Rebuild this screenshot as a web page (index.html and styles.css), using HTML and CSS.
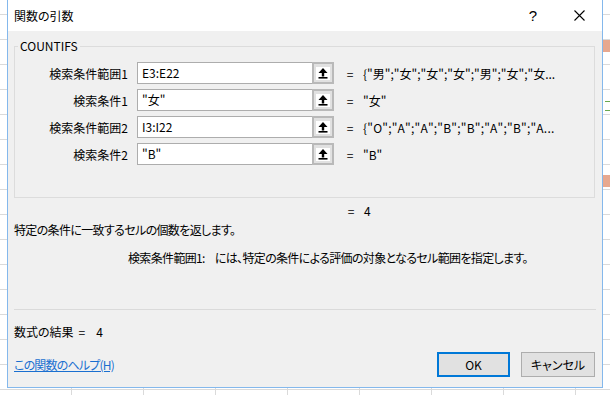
FILE: index.html
```html
<!DOCTYPE html>
<html lang="ja">
<head>
    <meta charset="UTF-8">
    <title>関数の引数</title>
    <link rel="stylesheet" href="styles.css">
</head>
<body>

    <div class="dialog">
        <div class="titlebar">
            <span class="title">関数の引数</span>
            <span class="caption-btn help">?</span>
            <span class="caption-btn">
                <svg width="11" height="11" viewBox="0 0 11 11"><path d="M0.5 0.5 L10.5 10.5 M10.5 0.5 L0.5 10.5" stroke="#000" stroke-width="1.1" fill="none"/></svg>
            </span>
        </div>

        <div class="content">
            <fieldset class="args">
                <legend>COUNTIFS</legend>

                <div class="arg-row">
                    <label>検索条件範囲1</label>
                    <div class="ref">
                        <span class="ref-input">E3:E22</span>
                        <span class="ref-btn"><span class="ref-icon"><svg width="14" height="13" viewBox="0 0 14 13"><path d="M7 1 L2.5 6 H11.5 Z" fill="#000"/><rect x="5.8" y="5.5" width="2.4" height="4" fill="#000"/><rect x="2.5" y="10" width="9" height="1.6" fill="#000"/></svg></span></span>
                    </div>
                    <span class="eq">=</span>
                    <span class="val">{"男";"女";"女";"女";"男";"女";"女...</span>
                </div>

                <div class="arg-row">
                    <label>検索条件1</label>
                    <div class="ref">
                        <span class="ref-input">"女"</span>
                        <span class="ref-btn"><span class="ref-icon"><svg width="14" height="13" viewBox="0 0 14 13"><path d="M7 1 L2.5 6 H11.5 Z" fill="#000"/><rect x="5.8" y="5.5" width="2.4" height="4" fill="#000"/><rect x="2.5" y="10" width="9" height="1.6" fill="#000"/></svg></span></span>
                    </div>
                    <span class="eq">=</span>
                    <span class="val">"女"</span>
                </div>

                <div class="arg-row">
                    <label>検索条件範囲2</label>
                    <div class="ref">
                        <span class="ref-input">I3:I22</span>
                        <span class="ref-btn"><span class="ref-icon"><svg width="14" height="13" viewBox="0 0 14 13"><path d="M7 1 L2.5 6 H11.5 Z" fill="#000"/><rect x="5.8" y="5.5" width="2.4" height="4" fill="#000"/><rect x="2.5" y="10" width="9" height="1.6" fill="#000"/></svg></span></span>
                    </div>
                    <span class="eq">=</span>
                    <span class="val val-wide">{"O";"A";"A";"B";"B";"A";"B";"A...</span>
                </div>

                <div class="arg-row">
                    <label>検索条件2</label>
                    <div class="ref">
                        <span class="ref-input">"B"</span>
                        <span class="ref-btn"><span class="ref-icon"><svg width="14" height="13" viewBox="0 0 14 13"><path d="M7 1 L2.5 6 H11.5 Z" fill="#000"/><rect x="5.8" y="5.5" width="2.4" height="4" fill="#000"/><rect x="2.5" y="10" width="9" height="1.6" fill="#000"/></svg></span></span>
                    </div>
                    <span class="eq">=</span>
                    <span class="val">"B"</span>
                </div>
            </fieldset>

            <div class="total"><span class="eq">=</span><span class="total-val">4</span></div>

            <p class="desc">特定の条件に一致するセルの個数を返します。</p>
            <p class="arg-desc"><span class="arg-name">検索条件範囲1:</span>には、特定の条件による評価の対象となるセル範囲を指定します。</p>

            <div class="sep"></div>

            <div class="result">数式の結果<span class="result-eq">=</span><span class="result-val">4</span></div>

            <div class="footer">
                <a href="#" class="help-link">この関数のヘルプ(H)</a>
                <div class="buttons">
                    <button class="btn btn-ok">OK</button>
                    <button class="btn">キャンセル</button>
                </div>
            </div>
        </div>
    </div>

</body>
</html>
```

FILE: styles.css
```css
body {
    margin: 0;
    width: 610px;
    height: 395px;
    overflow: hidden;
    font-family: "Noto Sans CJK JP", "Noto Sans", sans-serif;
    font-feature-settings: "palt";
    font-size: 12px;
    color: #000;
    background-color: #fff;
    background-image:
        linear-gradient(#e7a88f, #e7a88f),
        linear-gradient(#e7a88f, #e7a88f),
        linear-gradient(#6aa84f, #6aa84f),
        linear-gradient(#6aa84f, #6aa84f),
        repeating-linear-gradient(to bottom, transparent 0 14px, #dadada 14px 15px, transparent 15px 25px),
        repeating-linear-gradient(to right, transparent 0 71px, #dadada 71px 72px);
    background-size: 8px 12px, 8px 12px, 5px 1px, 5px 1px, 100% 100%, 100% 100%;
    background-position: 603px 40px, 603px 175px, 605px 101px, 605px 110px, 0 0, 0 0;
    background-repeat: no-repeat;
}

.dialog {
    box-sizing: border-box;
    margin-left: 7px;
    width: 596px;
    height: 388px;
    background: #f0f0f0;
    border: 1px solid #84b8ec;
    border-top: none;
}

.titlebar {
    display: flex;
    align-items: center;
    height: 31px;
    background: #fff;
}

.title {
    flex: 1;
    padding-left: 6px;
    line-height: 16px;
}

.caption-btn {
    display: flex;
    align-items: center;
    justify-content: center;
    width: 46px;
    height: 31px;
}

.help {
    font-family: "Liberation Sans", sans-serif;
    font-size: 15px;
}

.content {
    padding: 0 6px;
}

.args {
    box-sizing: border-box;
    width: 581px;
    margin: 7px 0 0 0;
    padding: 8px 3px 32px 3px;
    border: 1px solid #dcdcdc;
}

.args legend {
    padding: 0 2px;
    line-height: 16px;
}

.arg-row {
    display: flex;
    align-items: center;
    height: 22px;
    margin-bottom: 5px;
}

.arg-row:last-child {
    margin-bottom: 0;
}

.arg-row label {
    width: 110px;
    text-align: right;
    margin-right: 9px;
}

.ref {
    display: flex;
    width: 197px;
    height: 22px;
}

.ref-input {
    box-sizing: border-box;
    flex: 1;
    height: 22px;
    padding-left: 4px;
    line-height: 20px;
    background: #fff;
    border: 1px solid #adadad;
    border-right: none;
}

.ref-btn {
    box-sizing: border-box;
    display: flex;
    align-items: center;
    justify-content: center;
    width: 22px;
    height: 22px;
    background: #e1e1e1;
    border: 2px solid #b9b9b9;
}

.ref-icon {
    display: flex;
    background: #fff;
    width: 14px;
    height: 13px;
}

.eq {
    width: 8px;
    margin-left: 12px;
    text-align: center;
}

.val {
    margin-left: 9px;
    white-space: nowrap;
}

.val-wide {
    letter-spacing: 0.2px;
}

.total {
    display: flex;
    margin: 5px 0 0 321px;
    line-height: 16px;
}

.total-val {
    margin-left: 9px;
}

.desc {
    margin: 3px 0 0 0;
    line-height: 16px;
    letter-spacing: -0.65px;
}

.arg-desc {
    margin: 12px 0 0 114px;
    line-height: 16px;
    letter-spacing: -0.65px;
}

.arg-name {
    margin-right: 10px;
}

.sep {
    width: 582px;
    margin-top: 43px;
    border-top: 1px solid #dadada;
}

.result {
    margin-top: 14px;
    line-height: 16px;
}

.result-eq {
    margin-left: 5px;
}

.result-val {
    margin-left: 11px;
}

.footer {
    display: flex;
    align-items: center;
    justify-content: space-between;
    width: 581px;
    margin-top: 12px;
}

.help-link {
    color: #1a6fd0;
    text-decoration: underline;
    letter-spacing: -0.8px;
}

.buttons {
    display: flex;
    gap: 11px;
}

.btn {
    box-sizing: border-box;
    width: 74px;
    height: 25px;
    padding: 0;
    font-family: inherit;
    font-size: 12px;
    font-feature-settings: "palt";
    background: #e1e1e1;
    border: 1px solid #adadad;
}

.btn-ok {
    width: 73px;
    border: 2px solid #0078d7;
}
```
